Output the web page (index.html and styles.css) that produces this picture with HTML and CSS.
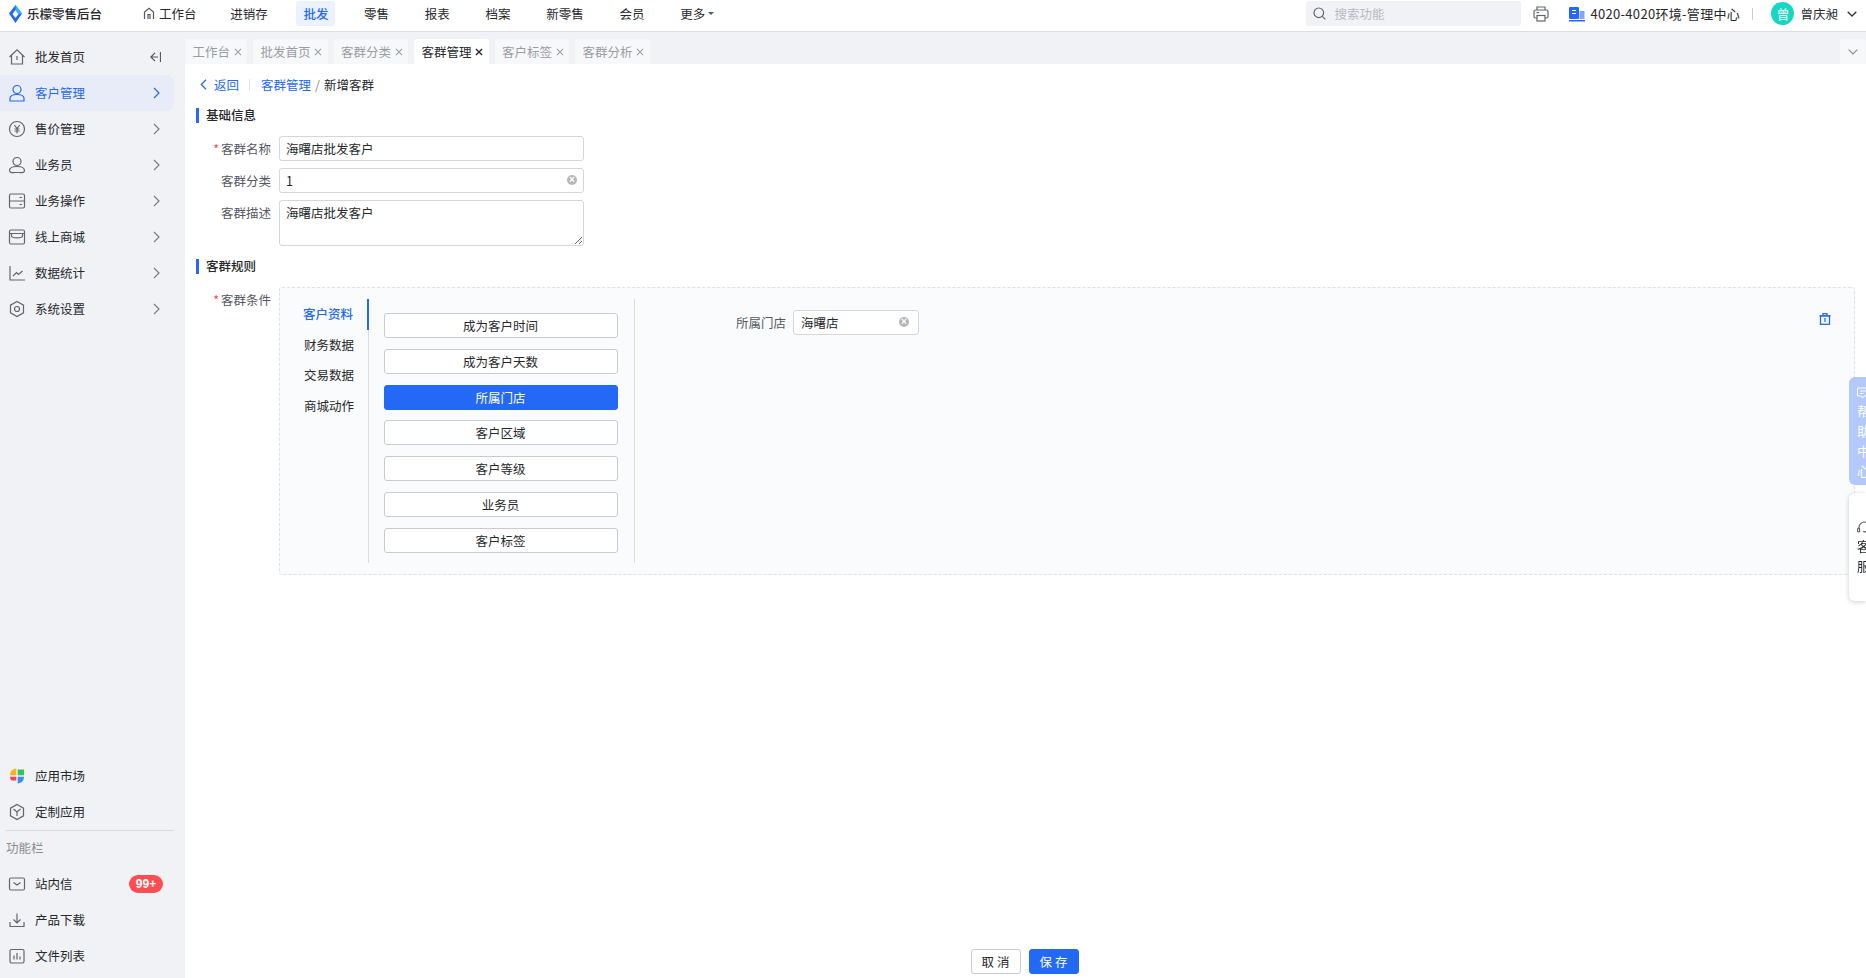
FILE: index.html
```html
<!DOCTYPE html>
<html lang="zh-CN">
<head>
    <meta charset="UTF-8">
    <title>乐檬零售后台</title>
    <link rel="stylesheet" href="styles.css">
</head>
<body>

    <!-- 顶部导航 -->
    <header class="topbar">
        <div class="logo">
            <svg width="15" height="18" viewBox="0 0 15 18"><path d="M7.5 0 14 8.500 7.500 18 1 8.500Z" fill="#2469f5"/><path d="M7.500 5 10.500 9 7.500 13 4.500 9Z" fill="#fff"/><path d="M7.500 0 14 8.500 10.500 9 7.500 5Z" fill="#35b6f5"/></svg>
            <span>乐檬零售后台</span>
        </div>
        <nav class="topnav">
            <a class="topnav-item" href="#"><svg class="home-mini" width="12" height="13" viewBox="0 0 12 13" fill="none" stroke="#55585f" stroke-width="1.200"><path d="M1.500 12V5L6 1.200 10.500 5V12"/><path d="M5 12V7.500H7V12"/></svg>工作台</a>
            <a class="topnav-item" href="#">进销存</a>
            <a class="topnav-item is-active" href="#">批发</a>
            <a class="topnav-item" href="#">零售</a>
            <a class="topnav-item" href="#">报表</a>
            <a class="topnav-item" href="#">档案</a>
            <a class="topnav-item" href="#">新零售</a>
            <a class="topnav-item" href="#">会员</a>
            <a class="topnav-item" href="#">更多<span class="caret"></span></a>
        </nav>
        <div class="topbar-right">
            <div class="search">
                <svg width="13" height="13" viewBox="0 0 13 13" fill="none" stroke="#62656e" stroke-width="1.200"><circle cx="5.800" cy="5.800" r="4.800"/><path d="M9.300 9.300 12.300 12.300"/></svg>
                <span>搜索功能</span>
            </div>
            <svg class="printer" width="16" height="16" viewBox="0 0 16 16" fill="none" stroke="#62656e" stroke-width="1.200"><path d="M4 4V1H12V4"/><rect x="1" y="4" width="14" height="8" rx="1.500"/><rect x="4" y="9.500" width="8" height="5.500" fill="#fff"/><path d="M3.500 6.500H6"/></svg>
            <svg class="building" width="16" height="16" viewBox="0 0 16 16"><rect x="0" y="1" width="10" height="12" rx="1" fill="#2469f5"/><rect x="10.500" y="5" width="5" height="8" fill="#7fa6f8"/><rect x="0" y="14" width="16" height="1.500" fill="#2469f5"/><path d="M3 4.500H7M3 7.500H7" stroke="#fff" stroke-width="1.200"/></svg>
            <span class="env">4020-4020环境-管理中心</span>
            <span class="vline"></span>
            <span class="avatar">曾</span>
            <span class="username">曾庆昶</span>
            <svg width="10" height="6" viewBox="0 0 10 6" fill="none" stroke="#33353a" stroke-width="1.300"><path d="M.7.7 5 5 9.300.7"/></svg>
        </div>
    </header>

    <div class="app">
        <!-- 侧边栏 -->
        <aside class="sidebar">
            <div class="side-top">
                <a class="side-item" href="#">
                    <svg class="side-icon" viewBox="0 0 18 18"><path d="M1.500 9 9 1.800 16.500 9M3.500 7.500V16H14.500V7.500"/><path d="M9 8V12"/></svg>
                    <span class="side-label">批发首页</span>
                    <svg class="side-collapse" width="11" height="10" viewBox="0 0 11 10" fill="none" stroke="#55585f" stroke-width="1.200"><path d="M10.500 0V10M5 .8.8 5 5 9.200M.8 5H8"/></svg>
                </a>
                <a class="side-item is-active" href="#">
                    <svg class="side-icon" viewBox="0 0 18 18"><circle cx="9" cy="5.500" r="4"/><path d="M2 17V14.500C2 12 4.500 10.500 9 10.500S16 12 16 14.500V17Z"/></svg>
                    <span class="side-label">客户管理</span>
                    <svg class="side-arrow" width="7" height="12" viewBox="0 0 7 12"><path d="M1 1 6 6 1 11"/></svg>
                </a>
                <a class="side-item" href="#">
                    <svg class="side-icon" viewBox="0 0 18 18"><circle cx="9" cy="9" r="7.500"/><path d="M6.300 5 9 8.500 11.700 5M9 8.500V13.500M6.500 9H11.500M6.500 11H11.500"/></svg>
                    <span class="side-label">售价管理</span>
                    <svg class="side-arrow" width="7" height="12" viewBox="0 0 7 12"><path d="M1 1 6 6 1 11"/></svg>
                </a>
                <a class="side-item" href="#">
                    <svg class="side-icon" viewBox="0 0 18 18"><circle cx="9" cy="5.500" r="4"/><path d="M1.500 14.500C1.500 12 4.500 10.500 9 10.500S16.500 12 16.500 14.500 14 16.500 9 16.500 1.500 17 1.500 14.500Z"/></svg>
                    <span class="side-label">业务员</span>
                    <svg class="side-arrow" width="7" height="12" viewBox="0 0 7 12"><path d="M1 1 6 6 1 11"/></svg>
                </a>
                <a class="side-item" href="#">
                    <svg class="side-icon" viewBox="0 0 18 18"><rect x="1.500" y="2" width="15" height="14" rx="1.500"/><path d="M1.500 9H16.500M11.500 5.500H14M11.500 12.500H14"/></svg>
                    <span class="side-label">业务操作</span>
                    <svg class="side-arrow" width="7" height="12" viewBox="0 0 7 12"><path d="M1 1 6 6 1 11"/></svg>
                </a>
                <a class="side-item" href="#">
                    <svg class="side-icon" viewBox="0 0 18 18"><rect x="1.500" y="2" width="15" height="14" rx="1.500"/><path d="M1.500 5.500H16.500M3.500 5.500V8C3.500 10.500 14.500 10.500 14.500 8V5.500"/></svg>
                    <span class="side-label">线上商城</span>
                    <svg class="side-arrow" width="7" height="12" viewBox="0 0 7 12"><path d="M1 1 6 6 1 11"/></svg>
                </a>
                <a class="side-item" href="#">
                    <svg class="side-icon" viewBox="0 0 18 18"><path d="M2 2V16H17"/><path d="M5 12 8.500 8.500 10.500 10.500 14.500 7"/></svg>
                    <span class="side-label">数据统计</span>
                    <svg class="side-arrow" width="7" height="12" viewBox="0 0 7 12"><path d="M1 1 6 6 1 11"/></svg>
                </a>
                <a class="side-item" href="#">
                    <svg class="side-icon" viewBox="0 0 18 18"><path d="M9 1.500 15.500 5.200V12.800L9 16.500 2.500 12.800V5.200Z"/><circle cx="9" cy="9" r="2.500"/></svg>
                    <span class="side-label">系统设置</span>
                    <svg class="side-arrow" width="7" height="12" viewBox="0 0 7 12"><path d="M1 1 6 6 1 11"/></svg>
                </a>
            </div>
            <div class="side-bottom">
                <a class="side-item" href="#">
                    <svg class="side-icon side-icon-color" viewBox="0 0 18 18"><path d="M8.300 1.500V8.300H2C2 4.500 4.500 1.800 8.300 1.500Z" fill="#ffb020"/><path d="M9.700 2.500H16V8.300H9.700Z" fill="#35c25e"/><path d="M8.300 9.700V13.500H3.500C2.500 12.500 2 11 2 9.700Z" fill="#f0484e"/><path d="M9.700 9.700H16C16 13.500 13.500 16 9.700 16.500Z" fill="#3b8df5"/></svg>
                    <span class="side-label">应用市场</span>
                </a>
                <a class="side-item" href="#">
                    <svg class="side-icon" viewBox="0 0 18 18"><path d="M9 1.500 15.500 5.200V12.800L9 16.500 2.500 12.800V5.200Z"/><path d="M5.500 6 9 9 12.500 6M9 9V13"/></svg>
                    <span class="side-label">定制应用</span>
                </a>
                <div class="side-divider"></div>
                <div class="side-title">功能栏</div>
                <a class="side-item" href="#">
                    <svg class="side-icon" viewBox="0 0 18 18"><rect x="1.500" y="3" width="15" height="12" rx="1.500"/><path d="M5.500 7.500 9 10 12.500 7.500"/></svg>
                    <span class="side-label">站内信</span>
                    <span class="badge">99+</span>
                </a>
                <a class="side-item" href="#">
                    <svg class="side-icon" viewBox="0 0 18 18"><path d="M2 11V15.500H16V11M9 2.500V11.500M5.500 8.500 9 12 12.500 8.500"/></svg>
                    <span class="side-label">产品下载</span>
                </a>
                <a class="side-item" href="#">
                    <svg class="side-icon" viewBox="0 0 18 18"><rect x="2" y="2.500" width="14" height="13.500" rx="1.500"/><path d="M6 12.500V8.500M9 12.500V6M12 12.500V9.500"/></svg>
                    <span class="side-label">文件列表</span>
                </a>
            </div>
        </aside>

        <main class="main">
            <!-- 标签页 -->
            <div class="tabs">
                <div class="tab">工作台<svg class="tab-close" viewBox="0 0 7 7"><path d="M.8.8 6.200 6.200M6.200.8.8 6.200"/></svg></div>
                <div class="tab">批发首页<svg class="tab-close" viewBox="0 0 7 7"><path d="M.8.8 6.200 6.200M6.200.8.8 6.200"/></svg></div>
                <div class="tab">客群分类<svg class="tab-close" viewBox="0 0 7 7"><path d="M.8.8 6.200 6.200M6.200.8.8 6.200"/></svg></div>
                <div class="tab is-active">客群管理<svg class="tab-close" viewBox="0 0 7 7"><path d="M.8.8 6.200 6.200M6.200.8.8 6.200"/></svg></div>
                <div class="tab">客户标签<svg class="tab-close" viewBox="0 0 7 7"><path d="M.8.8 6.200 6.200M6.200.8.8 6.200"/></svg></div>
                <div class="tab">客群分析<svg class="tab-close" viewBox="0 0 7 7"><path d="M.8.8 6.200 6.200M6.200.8.8 6.200"/></svg></div>
                <div class="tabs-more">
                    <svg width="10" height="6" viewBox="0 0 10 6" fill="none" stroke="#8a8d93" stroke-width="1.200"><path d="M.7.7 5 5 9.300.7"/></svg>
                </div>
            </div>

            <div class="page">
                <div class="breadcrumb">
                    <a class="back" href="#"><svg width="7" height="11" viewBox="0 0 7 11" fill="none" stroke="#2469f5" stroke-width="1.300"><path d="M6 .8 1.300 5.500 6 10.200"/></svg>返回</a>
                    <span class="crumb-line"></span>
                    <a class="crumb-link" href="#">客群管理</a>
                    <span class="crumb-sep">/</span>
                    <span>新增客群</span>
                </div>

                <h3 class="section-title">基础信息</h3>
                <div class="form-row">
                    <label class="form-label required">客群名称</label>
                    <div class="input-wrap"><input class="form-input" type="text" value="海曙店批发客户"></div>
                </div>
                <div class="form-row">
                    <label class="form-label">客群分类</label>
                    <div class="input-wrap">
                        <input class="form-input" type="text" value="1">
                        <span class="clear-icon">×</span>
                    </div>
                </div>
                <div class="form-row form-row-last">
                    <label class="form-label">客群描述</label>
                    <div class="input-wrap"><textarea class="form-input form-textarea">海曙店批发客户</textarea></div>
                </div>

                <h3 class="section-title">客群规则</h3>
                <div class="rule-row">
                    <label class="form-label required">客群条件</label>
                    <div class="rule-box">
                        <ul class="rule-menu">
                            <li class="rule-menu-item is-active">客户资料</li>
                            <li class="rule-menu-item">财务数据</li>
                            <li class="rule-menu-item">交易数据</li>
                            <li class="rule-menu-item">商城动作</li>
                        </ul>
                        <div class="rule-fields">
                            <button class="rule-btn">成为客户时间</button>
                            <button class="rule-btn">成为客户天数</button>
                            <button class="rule-btn is-active">所属门店</button>
                            <button class="rule-btn">客户区域</button>
                            <button class="rule-btn">客户等级</button>
                            <button class="rule-btn">业务员</button>
                            <button class="rule-btn">客户标签</button>
                        </div>
                        <div class="rule-detail">
                            <div class="detail-field">
                                <span class="detail-label">所属门店</span>
                                <div class="store-select">海曙店<span class="clear-icon">×</span></div>
                            </div>
                            <svg class="trash" width="12" height="12" viewBox="0 0 12 12" fill="none" stroke="#2469f5" stroke-width="1.300"><path d="M.5 2.800H11.500M4 2.500V.7H8V2.500"/><rect x="1.500" y="2.800" width="9" height="8.500"/><path d="M6 5V9"/></svg>
                        </div>
                    </div>
                </div>
            </div>

            <div class="form-footer">
                <button class="btn">取 消</button>
                <button class="btn btn-primary">保 存</button>
            </div>
        </main>
    </div>

    <!-- 右侧悬浮 -->
    <div class="float-help">
        <svg width="12" height="12" viewBox="0 0 12 12" fill="none" stroke="#fff" stroke-width="1"><path d="M.5 1H11.500V9H7L5.500 11 4.500 9H.5Z"/><path d="M3 4H9M3 6.500H6.500"/></svg>
        <span>帮</span><span>助</span><span>中</span><span>心</span>
    </div>
    <div class="float-service">
        <svg width="14" height="14" viewBox="0 0 14 14" fill="none" stroke="#55585f" stroke-width="1.100"><path d="M2 8V6.500C2 3.500 4.500 1 7.500 1S13 3.500 13 6.500"/><rect x=".6" y="7" width="2" height="4" rx="1"/><path d="M6 10.500C8 11.500 9.500 10.500 10.500 9.500"/></svg>
        <span>客</span><span>服</span>
    </div>

</body>
</html>
```

FILE: styles.css
```css
* {
    box-sizing: border-box;
}
html, body {
    height: 100%;
}
body {
    margin: 0;
    overflow: hidden;
    font-family: "Noto Sans CJK SC", "Liberation Sans", sans-serif;
    font-size: 12.500px;
    color: #26282c;
    background-color: #fff;
}
a {
    color: inherit;
    text-decoration: none;
}

/* 顶部导航 */
.topbar {
    display: flex;
    align-items: center;
    height: 32px;
    padding: 0 0 4px 8px;
    background-color: #fff;
    border-bottom: 1px solid #dcdde0;
}
.logo {
    display: flex;
    align-items: center;
    gap: 4px;
    width: 128px;
    font-weight: 500;
}
.topnav {
    display: flex;
    align-items: center;
    gap: 21.700px;
}
.topnav-item {
    display: flex;
    align-items: center;
    height: 25px;
    padding: 0 7px;
    border-radius: 3px;
    white-space: nowrap;
}
.topnav-item:first-child {
    margin-right: -2px;
}
.topnav-item.is-active {
    color: #2469f5;
    background-color: #ebf1fd;
    font-weight: 500;
}
.home-mini {
    margin-right: 4px;
}
.caret {
    width: 0;
    height: 0;
    margin-left: 3px;
    border-left: 3px solid transparent;
    border-right: 3px solid transparent;
    border-top: 3px solid #55585f;
}
.topbar-right {
    display: flex;
    align-items: center;
    margin-left: auto;
    padding-right: 9px;
}
.search {
    display: flex;
    align-items: center;
    gap: 8px;
    width: 215px;
    height: 25px;
    padding-left: 7px;
    margin-right: 12px;
    color: #b8bac0;
    background-color: #f1f2f5;
    border-radius: 3px;
}
.printer {
    margin-right: 20px;
}
.building {
    margin-right: 5px;
}
.env {
    width: 149px;
    font-size: 13px;
    letter-spacing: 0.300px;
    white-space: nowrap;
}
.vline {
    width: 1px;
    height: 12px;
    margin: 0 18px 0 13px;
    background-color: #c9cbd0;
}
.avatar {
    display: flex;
    align-items: center;
    justify-content: center;
    width: 23px;
    height: 23px;
    margin-right: 6px;
    color: #fff;
    font-size: 13px;
    background-color: #14d8c4;
    border-radius: 50%;
}
.username {
    margin-right: 9px;
    white-space: nowrap;
}

.app {
    display: flex;
    height: calc(100% - 32px);
}

/* 侧边栏 */
.sidebar {
    display: flex;
    flex-direction: column;
    justify-content: space-between;
    flex: none;
    width: 185px;
    padding: 7px 0 4px;
    background-color: #f1f2f5;
}
.side-item {
    display: flex;
    align-items: center;
    width: 174px;
    height: 36px;
    padding-left: 8px;
    border-radius: 0 8px 8px 0;
}
.side-item.is-active {
    color: #2469f5;
    background-color: #e7ecf8;
}
.side-icon {
    flex: none;
    width: 18px;
    height: 18px;
    fill: none;
    stroke: #62656e;
    stroke-width: 1.200;
}
.side-icon-color {
    stroke: none;
}
.is-active .side-icon {
    stroke: #2469f5;
}
.side-label {
    margin-left: 9px;
    padding-bottom: 2px;
}
.side-arrow {
    margin-left: auto;
    margin-right: 14px;
    fill: none;
    stroke: #7a7d84;
    stroke-width: 1.200;
}
.is-active .side-arrow {
    stroke: #2469f5;
}
.side-collapse {
    margin-left: auto;
    margin-right: 13px;
}
.side-divider {
    width: 168px;
    height: 1px;
    margin-left: 6px;
    background-color: #d9dade;
}
.side-title {
    height: 35px;
    padding: 7px 0 0 6px;
    line-height: 19px;
    color: #8a8d93;
}
.badge {
    margin-left: auto;
    margin-right: 11px;
    width: 34px;
    height: 18px;
    line-height: 18px;
    text-align: center;
    color: #fff;
    font-family: "Liberation Sans", sans-serif;
    font-size: 12px;
    font-weight: 700;
    background-color: #ff4d52;
    border-radius: 9px;
}

/* 主内容 */
.main {
    display: flex;
    flex-direction: column;
    flex: 1;
    min-width: 0;
}
.tabs {
    display: flex;
    align-items: flex-end;
    gap: 6px;
    flex: none;
    height: 32px;
    background-color: #f1f2f5;
}
.tab {
    display: flex;
    align-items: center;
    height: 25px;
    padding: 0 5.500px 0 7.500px;
    color: #9a9ca3;
    background-color: #f7f8f9;
    border-radius: 3px 3px 0 0;
    white-space: nowrap;
}
.tab.is-active {
    color: #26282c;
    background-color: #fff;
}
.tab-close {
    width: 8px;
    height: 8px;
    margin-left: 3.500px;
    fill: none;
    stroke: #a0a2a8;
    stroke-width: 1;
}
.tab.is-active .tab-close {
    stroke: #26282c;
    stroke-width: 1.200;
}
.tabs-more {
    display: flex;
    align-items: center;
    justify-content: center;
    width: 25px;
    height: 25px;
    margin-left: auto;
    margin-right: 1px;
    background-color: #f7f8f9;
}
.page {
    flex: 1;
    padding: 11px 11px 0;
}
.breadcrumb {
    display: flex;
    align-items: center;
    height: 22px;
    margin-bottom: 11px;
    padding: 0 0 3px 4px;
}
.back {
    display: flex;
    align-items: center;
    gap: 7px;
    color: #2469f5;
}
.crumb-line {
    width: 1px;
    height: 12px;
    margin: 0 11px 0 10px;
    background-color: #e3e4e7;
}
.crumb-link {
    color: #2469f5;
}
.crumb-sep {
    margin: 0 4px;
    color: #8a8d93;
}
.section-title {
    height: 15px;
    line-height: 14px;
    margin: 0 0 13px;
    padding-left: 7px;
    font-size: 12.500px;
    font-weight: 500;
    border-left: 3px solid #2469f5;
}
.form-row {
    display: flex;
    margin-bottom: 7px;
}
.form-row-last {
    margin-bottom: 13px;
}
.form-label {
    flex: none;
    width: 75px;
    margin-right: 8px;
    line-height: 25px;
    text-align: right;
    color: #55585f;
}
.required::before {
    content: "*";
    margin-right: 2px;
    color: #f0484e;
}
.input-wrap {
    position: relative;
    width: 305px;
}
.form-input {
    display: block;
    width: 100%;
    height: 25px;
    padding: 0 6px;
    color: #26282c;
    font-family: inherit;
    font-size: 12.500px;
    background-color: #fff;
    border: 1px solid #d5d6da;
    border-radius: 3px;
    outline: none;
}
.form-textarea {
    height: 46px;
    padding-top: 3px;
    line-height: 18px;
}
.clear-icon {
    position: absolute;
    top: 7px;
    right: 7px;
    width: 10px;
    height: 10px;
    line-height: 10px;
    text-align: center;
    color: #fff;
    font-family: "Liberation Sans", sans-serif;
    font-size: 10px;
    font-weight: 700;
    background-color: #b5b7bb;
    border-radius: 50%;
}

/* 客群规则 */
.rule-row {
    display: flex;
}
.rule-box {
    display: flex;
    flex: 1;
    height: 288px;
    padding: 11px 0;
    background-color: #fafbfd;
    border: 1px dashed #dfe1e5;
    border-radius: 3px;
}
.rule-menu {
    flex: none;
    width: 89px;
    margin: 0;
    padding: 0;
    list-style: none;
    border-right: 1px solid #dcdde0;
}
.rule-menu-item {
    height: 30.700px;
    line-height: 30px;
    margin-right: -1px;
    padding-right: 15px;
    text-align: right;
}
.rule-menu-item.is-active {
    color: #2469f5;
    border-right: 2px solid #2469f5;
    padding-right: 14px;
    font-weight: 500;
}
.rule-fields {
    display: flex;
    flex-direction: column;
    gap: 10.800px;
    flex: none;
    width: 265.500px;
    padding: 14px 16px 0 14.500px;
    border-right: 1px solid #dcdde0;
}
.rule-btn {
    height: 25px;
    padding: 0;
    color: #26282c;
    font-family: inherit;
    font-size: 12.500px;
    background-color: #fff;
    border: 1px solid #c9cbd0;
    border-radius: 3px;
}
.rule-btn.is-active {
    color: #fff;
    background-color: #2469f5;
    border-color: #2469f5;
}
.rule-detail {
    display: flex;
    justify-content: space-between;
    align-items: flex-start;
    flex: 1;
    padding-left: 101.500px;
    padding-right: 23px;
}
.detail-field {
    display: flex;
    align-items: center;
    gap: 7px;
    height: 25px;
    margin-top: 11px;
}
.detail-label {
    color: #55585f;
}
.store-select {
    position: relative;
    width: 126px;
    height: 25px;
    line-height: 23px;
    padding-left: 7px;
    background-color: #fff;
    border: 1px solid #d5d6da;
    border-radius: 3px;
}
.store-select .clear-icon {
    top: 6px;
    right: 9px;
}
.trash {
    margin-top: 14px;
}

/* 底部按钮 */
.form-footer {
    display: flex;
    justify-content: center;
    gap: 8px;
    flex: none;
    padding: 0 2px 4px 0;
}
.btn {
    width: 50px;
    height: 25px;
    padding: 0;
    color: #26282c;
    font-family: inherit;
    font-size: 12.500px;
    background-color: #fff;
    border: 1px solid #c9cbd0;
    border-radius: 3px;
}
.btn-primary {
    color: #fff;
    background-color: #2469f5;
    border-color: #2469f5;
}

/* 右侧悬浮 */
.float-help, .float-service {
    position: fixed;
    right: 0;
    display: flex;
    flex-direction: column;
    width: 17px;
    padding-left: 8px;
    overflow: hidden;
    border-radius: 6px 0 0 6px;
}
.float-help {
    top: 377px;
    height: 108px;
    padding-top: 6px;
    color: #fff;
    font-size: 13px;
    line-height: 20px;
    background-color: #b4c8fb;
}
.float-help svg {
    flex: none;
    margin: 4px 0 2px;
}
.float-service {
    top: 493px;
    height: 108px;
    padding-top: 28px;
    font-size: 13px;
    line-height: 20px;
    background-color: #fff;
    box-shadow: 0 1px 5px rgba(0, 0, 0, 0.2);
}
.float-service svg {
    flex: none;
    margin-bottom: 1px;
}
```
